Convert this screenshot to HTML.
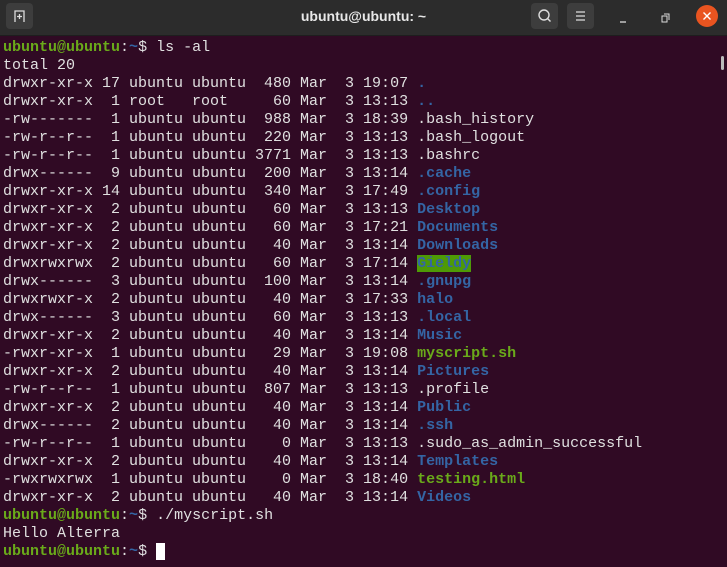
<!DOCTYPE html>
<html><head><style>
html,body{margin:0;padding:0;width:727px;height:567px;overflow:hidden;background:#300a24}
.tb{position:absolute;left:0;top:0;width:727px;height:35px;background:#2c2c2c;border-bottom:1px solid #1e1e1e}
.btn{position:absolute;top:3px;width:27px;height:26px;background:#3d3d3d;border-radius:4px}
.title{position:absolute;left:0;width:727px;top:8px;text-align:center;color:#e8e8e8;font:bold 14px "Liberation Sans",sans-serif}
pre{position:absolute;left:3px;top:39px;margin:0;font:15px/18px "Liberation Mono",monospace;color:#e0e0e0;letter-spacing:0}
.g{color:#6aaa1a;font-weight:bold}.b{color:#3465a4;font-weight:bold}.gr{color:#6aaa1a;font-weight:bold}
.hl{background:#4e9a06;color:#3465a4;font-weight:bold}
.cur{background:#fff}
</style></head><body>
<div class="tb">
<div class="btn" style="left:6px"><svg width="27" height="26"><path d="M9 19V8h9v11M13.5 11v5M11 13.5h5" stroke="#ddd" fill="none" stroke-width="1.3"/></svg></div>
<div class="title">ubuntu@ubuntu: ~</div>
<div class="btn" style="left:531px"><svg width="27" height="26"><circle cx="13" cy="12" r="5" stroke="#ddd" fill="none" stroke-width="1.4"/><path d="M16.5 15.5l3 3" stroke="#ddd" stroke-width="1.4"/></svg></div>
<div class="btn" style="left:567px"><svg width="27" height="26"><path d="M9 9h9M9 13h9M9 17h9" stroke="#ddd" stroke-width="1.3"/></svg></div>
<svg style="position:absolute;left:612px;top:4px" width="115" height="28"><path d="M8 18h6" stroke="#ddd" stroke-width="1.3"/><rect x="50" y="12" width="5" height="6" stroke="#ddd" fill="none"/><path d="M52 10h5v6" stroke="#ddd" fill="none"/><circle cx="95" cy="12" r="11" fill="#e95420"/><path d="M91.5 8.5l7 7M98.5 8.5l-7 7" stroke="#fff" stroke-width="1.4"/></svg>
</div>
<div style="position:absolute;left:721px;top:56px;width:3px;height:14px;background:#bbb;border-radius:2px"></div>
<pre><span class="g">ubuntu@ubuntu</span>:<span class="b">~</span>$ ls -al
total 20
drwxr-xr-x 17 ubuntu ubuntu  480 Mar  3 19:07 <span class="b">.</span>
drwxr-xr-x  1 root   root     60 Mar  3 13:13 <span class="b">..</span>
-rw-------  1 ubuntu ubuntu  988 Mar  3 18:39 .bash_history
-rw-r--r--  1 ubuntu ubuntu  220 Mar  3 13:13 .bash_logout
-rw-r--r--  1 ubuntu ubuntu 3771 Mar  3 13:13 .bashrc
drwx------  9 ubuntu ubuntu  200 Mar  3 13:14 <span class="b">.cache</span>
drwxr-xr-x 14 ubuntu ubuntu  340 Mar  3 17:49 <span class="b">.config</span>
drwxr-xr-x  2 ubuntu ubuntu   60 Mar  3 13:13 <span class="b">Desktop</span>
drwxr-xr-x  2 ubuntu ubuntu   60 Mar  3 17:21 <span class="b">Documents</span>
drwxr-xr-x  2 ubuntu ubuntu   40 Mar  3 13:14 <span class="b">Downloads</span>
drwxrwxrwx  2 ubuntu ubuntu   60 Mar  3 17:14 <span class="hl">Gieldy</span>
drwx------  3 ubuntu ubuntu  100 Mar  3 13:14 <span class="b">.gnupg</span>
drwxrwxr-x  2 ubuntu ubuntu   40 Mar  3 17:33 <span class="b">halo</span>
drwx------  3 ubuntu ubuntu   60 Mar  3 13:13 <span class="b">.local</span>
drwxr-xr-x  2 ubuntu ubuntu   40 Mar  3 13:14 <span class="b">Music</span>
-rwxr-xr-x  1 ubuntu ubuntu   29 Mar  3 19:08 <span class="gr">myscript.sh</span>
drwxr-xr-x  2 ubuntu ubuntu   40 Mar  3 13:14 <span class="b">Pictures</span>
-rw-r--r--  1 ubuntu ubuntu  807 Mar  3 13:13 .profile
drwxr-xr-x  2 ubuntu ubuntu   40 Mar  3 13:14 <span class="b">Public</span>
drwx------  2 ubuntu ubuntu   40 Mar  3 13:14 <span class="b">.ssh</span>
-rw-r--r--  1 ubuntu ubuntu    0 Mar  3 13:13 .sudo_as_admin_successful
drwxr-xr-x  2 ubuntu ubuntu   40 Mar  3 13:14 <span class="b">Templates</span>
-rwxrwxrwx  1 ubuntu ubuntu    0 Mar  3 18:40 <span class="gr">testing.html</span>
drwxr-xr-x  2 ubuntu ubuntu   40 Mar  3 13:14 <span class="b">Videos</span>
<span class="g">ubuntu@ubuntu</span>:<span class="b">~</span>$ ./myscript.sh
Hello Alterra
<span class="g">ubuntu@ubuntu</span>:<span class="b">~</span>$ <span class="cur"> </span></pre>
</body></html>
